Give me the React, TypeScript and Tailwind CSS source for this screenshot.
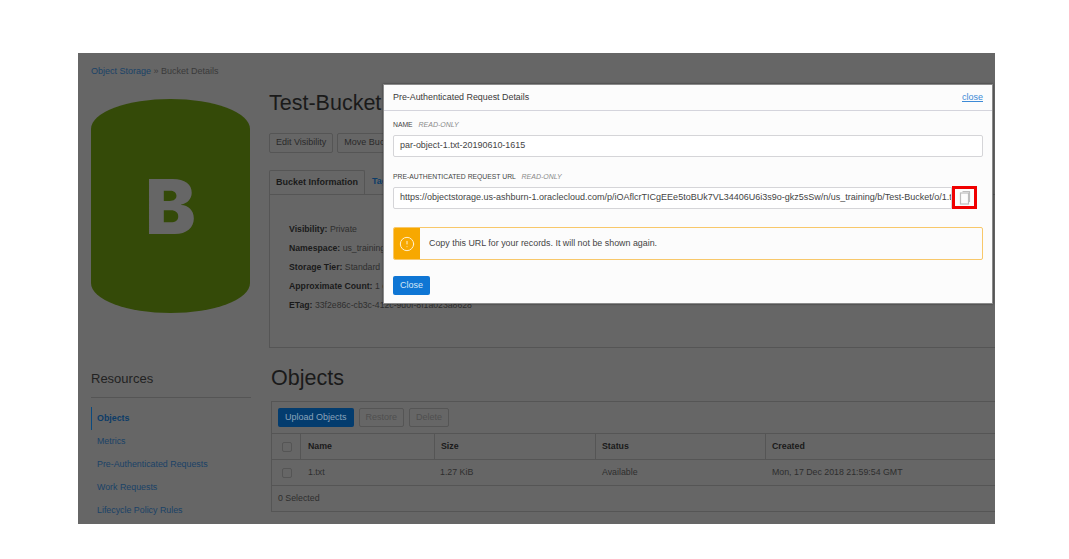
import { CircleAlert } from "lucide-react";

const font = "font-['Liberation_Sans',Arial,sans-serif]";

const info = [
  { label: "Visibility:", value: "Private" },
  { label: "Namespace:", value: "us_training" },
  { label: "Storage Tier:", value: "Standard" },
  { label: "Approximate Count:", value: "1 object" },
  { label: "ETag:", value: "33f2e86c-cb3c-412c-9d0f-8f1a023a8628" },
];

const resources = [
  "Objects",
  "Metrics",
  "Pre-Authenticated Requests",
  "Work Requests",
  "Lifecycle Policy Rules",
];

function Sidebar() {
  return (
    <div className="w-[160px] shrink-0">
      <div className="h-[36px] pt-[12px] text-[9px] leading-[12px] text-[#3a3a3a]">
        <span className="text-[#1a4266]">Object Storage</span> » Bucket Details
      </div>
      <div className="mt-[10px] flex h-[214px] w-[159px] items-center justify-center rounded-[50%/14%] bg-[#344a08]">
        <span className="font-['Inter',sans-serif] text-[75px] font-black leading-none text-[#666666]">B</span>
      </div>
      <div className="mt-[58px] text-[13px] leading-[16px] text-[#222222]">Resources</div>
      <div className="mt-[10px] border-t border-[#555555]" />
      <div className="mt-[9px] flex flex-col">
        {resources.map((name, i) => (
          <div
            key={name}
            className={
              i === 0
                ? "flex h-[23px] items-center border-l border-[#0a4a80] pl-[5px] text-[8.85px] font-bold text-[#0c3c68]"
                : "flex h-[23px] items-center border-l border-transparent pl-[5px] text-[8.85px] text-[#1a4266]"
            }
          >
            {name}
          </div>
        ))}
      </div>
    </div>
  );
}

function Details() {
  return (
    <div className="ml-[18px] w-[800px] shrink-0">
      <h1 className="pt-[38px] text-[21.5px] leading-[24px] text-[#1a1a1a]">Test-Bucket</h1>
      <div className="mt-[18px] flex gap-[4px]">
        <div className="flex h-[20px] items-center rounded-[2px] border border-[#555555] px-[6px] text-[9px] text-[#2a2a2a]">
          Edit Visibility
        </div>
        <div className="flex h-[20px] items-center rounded-[2px] border border-[#555555] px-[6px] text-[9px] text-[#2a2a2a]">
          Move Bucket
        </div>
      </div>
      <div className="mt-[17px] flex h-[24px]">
        <div className="flex items-center rounded-t-[2px] border border-b-0 border-[#555555] px-[6px] text-[9px] font-bold text-[#1a1a1a]">
          Bucket Information
        </div>
        <div className="flex items-center px-[7px] text-[9px] font-bold text-[#0c3c68]">Tags</div>
      </div>
      <div className="flex h-[154px] flex-col border-t border-b border-l border-[#555555] pl-[19px] pt-[25px]">
        {info.map((row) => (
          <div key={row.label} className="h-[19px] text-[8.7px] leading-[19px] text-[#2e2e2e]">
            <span className="font-bold text-[#1a1a1a]">{row.label}</span> {row.value}
          </div>
        ))}
      </div>
      <h2 className="ml-[2px] mt-[17px] text-[21.5px] leading-[26px] text-[#1a1a1a]">Objects</h2>
      <div className="ml-[2px] mt-[10px] border border-[#555555] text-[8.8px] text-[#2e2e2e]">
        <div className="flex h-[31px] items-center gap-[5px] pl-[6px]">
          <div className="flex h-[19px] items-center rounded-[2px] bg-[#033c6e] px-[7px] text-[9px] text-[#8aa3ba]">
            Upload Objects
          </div>
          <div className="flex h-[19px] items-center rounded-[2px] border border-[#555555] px-[6px] text-[9px] text-[#4f4f4f]">
            Restore
          </div>
          <div className="flex h-[19px] items-center rounded-[2px] border border-[#555555] px-[6px] text-[9px] text-[#4f4f4f]">
            Delete
          </div>
        </div>
        <div className="flex h-[26px] items-center border-t border-[#555555] font-bold text-[#1a1a1a]">
          <div className="flex h-full w-[29px] items-center border-r border-[#555555] pl-[10px]">
            <div className="size-[10px] rounded-[2px] border border-[#555555]" />
          </div>
          <div className="flex h-full w-[134px] items-center border-r border-[#555555] pl-[7px]">Name</div>
          <div className="flex h-full w-[161px] items-center border-r border-[#555555] pl-[6px]">Size</div>
          <div className="flex h-full w-[170px] items-center border-r border-[#555555] pl-[6px]">Status</div>
          <div className="flex h-full items-center pl-[6px]">Created</div>
        </div>
        <div className="flex h-[26px] items-center border-t border-[#555555]">
          <div className="w-[29px] pl-[10px]">
            <div className="size-[10px] rounded-[2px] border border-[#555555]" />
          </div>
          <div className="w-[134px] pl-[7px]">1.txt</div>
          <div className="w-[161px] pl-[5px]">1.27 KiB</div>
          <div className="w-[170px] pl-[6px]">Available</div>
          <div className="pl-[6px]">Mon, 17 Dec 2018 21:59:54 GMT</div>
        </div>
        <div className="flex h-[26px] items-center border-t border-[#555555] pl-[6px]">0 Selected</div>
      </div>
    </div>
  );
}

function CopyIcon() {
  return (
    <svg width="12" height="14" viewBox="0 1 12 14" fill="none" stroke="#bdbdbd" strokeWidth="1.2">
      <path d="M3.5 1.5H10.5V12" />
      <rect x="1.5" y="3" width="8" height="11" fill="#fcfcfc" />
    </svg>
  );
}

function Modal() {
  return (
    <div className="absolute left-[305px] top-[31px] h-[220px] w-[610px] border border-[#8a8a8a] bg-[#fcfcfc] shadow-[0_0_2px_rgba(0,0,0,0.5)]">
      <div className="flex h-[26px] items-center justify-between border-b border-[#d4d4dc] px-[9px]">
        <span className="text-[8.9px] text-[#3a3a3a]">Pre-Authenticated Request Details</span>
        <span className="text-[9px] text-[#3d8ad6] underline">close</span>
      </div>
      <div className="px-[9px]">
        <div className="mt-[9px] h-[10px] text-[6.8px] leading-[10px] text-[#444444]">
          NAME <em className="ml-[4px] text-[7px] text-[#8a8a8a]">READ-ONLY</em>
        </div>
        <div className="mt-[5px] flex h-[22px] items-center rounded-[2px] border border-[#d5d5d8] bg-white px-[6px] text-[8.95px] text-[#444444]">
          par-object-1.txt-20190610-1615
        </div>
        <div className="mt-[15px] h-[10px] text-[6.8px] leading-[10px] text-[#444444]">
          PRE-AUTHENTICATED REQUEST URL <em className="ml-[4px] text-[7px] text-[#8a8a8a]">READ-ONLY</em>
        </div>
        <div className="mt-[5px] flex h-[22px]">
          <div className="flex w-[559px] items-center overflow-hidden whitespace-nowrap rounded-l-[2px] border border-[#d5d5d8] bg-white pl-[6px] pr-[3px] text-[9px] text-[#444444]">
            https://objectstorage.us-ashburn-1.oraclecloud.com/p/iOAflcrTICgEEe5toBUk7VL34406U6i3s9o-gkz5sSw/n/us_training/b/Test-Bucket/o/1.txt
          </div>
          <div className="-mt-[1px] flex h-[23px] w-[25px] items-center justify-center border-[3px] border-[#f00000]">
            <CopyIcon />
          </div>
        </div>
        <div className="mt-[18px] flex h-[33px] overflow-hidden rounded-[2px] border border-[#f8c86a]">
          <div className="flex w-[26px] items-center justify-center bg-[#f7a800]">
            <CircleAlert size={16} className="text-[#fff0d0]" strokeWidth={1.5} />
          </div>
          <div className="flex items-center pl-[9px] text-[8.9px] text-[#444444]">
            Copy this URL for your records. It will not be shown again.
          </div>
        </div>
        <div className="mt-[16px] flex h-[19px] w-[37px] items-center justify-center rounded-[2px] bg-[#0f76d4] text-[9px] text-[#d4e6f7]">
          Close
        </div>
      </div>
    </div>
  );
}

export default function App() {
  return (
    <div className={`h-[559px] w-[1069px] overflow-hidden bg-white pl-[78px] pt-[53px] ${font}`}>
      <div className="relative flex h-[471px] w-[917px] overflow-hidden bg-[#666666] pl-[13px]">
        <Sidebar />
        <Details />
        <Modal />
      </div>
    </div>
  );
}
